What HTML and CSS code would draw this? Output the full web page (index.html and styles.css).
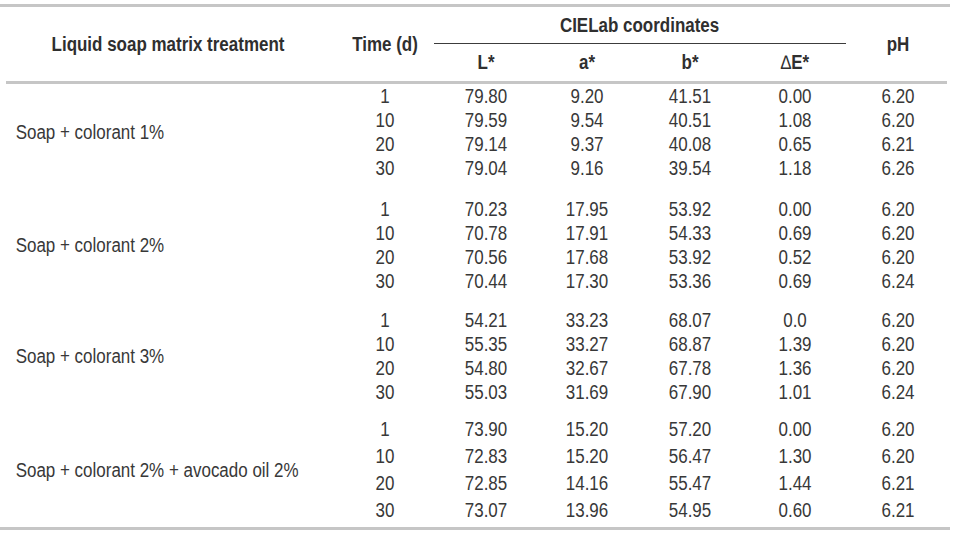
FILE: index.html
```html
<!DOCTYPE html>
<html>
<head>
<meta charset="utf-8">
<link rel="stylesheet" href="styles.css">
</head>
<body>
<div class="sheet">
<table class="data">
  <colgroup>
    <col class="c-treat"><col class="c-time"><col class="c-l"><col class="c-a"><col class="c-b"><col class="c-de"><col class="c-ph">
  </colgroup>
  <thead>
    <tr class="h1">
      <th rowspan="2" class="th-treat">Liquid soap matrix treatment</th>
      <th rowspan="2" class="th-time">Time (d)</th>
      <th colspan="4" class="th-group"><div class="group-label"><span class="narrow">CIELab coordinates</span></div></th>
      <th rowspan="2" class="th-ph">pH</th>
    </tr>
    <tr class="h2">
      <th>L*</th><th>a*</th><th>b*</th><th><span class="delta">∆</span>E*</th>
    </tr>
    <tr class="rule"><td colspan="7" class="fill"></td></tr>
  </thead>
  <tbody>
    <tr><td rowspan="4" class="label">Soap + colorant 1%</td><td>1</td><td>79.80</td><td>9.20</td><td>41.51</td><td>0.00</td><td>6.20</td></tr>
    <tr><td>10</td><td>79.59</td><td>9.54</td><td>40.51</td><td>1.08</td><td>6.20</td></tr>
    <tr><td>20</td><td>79.14</td><td>9.37</td><td>40.08</td><td>0.65</td><td>6.21</td></tr>
    <tr><td>30</td><td>79.04</td><td>9.16</td><td>39.54</td><td>1.18</td><td>6.26</td></tr>
    <tr class="gap g1"><td colspan="7" class="fill"></td></tr>
    <tr><td rowspan="4" class="label">Soap + colorant 2%</td><td>1</td><td>70.23</td><td>17.95</td><td>53.92</td><td>0.00</td><td>6.20</td></tr>
    <tr><td>10</td><td>70.78</td><td>17.91</td><td>54.33</td><td>0.69</td><td>6.20</td></tr>
    <tr><td>20</td><td>70.56</td><td>17.68</td><td>53.92</td><td>0.52</td><td>6.20</td></tr>
    <tr><td>30</td><td>70.44</td><td>17.30</td><td>53.36</td><td>0.69</td><td>6.24</td></tr>
    <tr class="gap g2"><td colspan="7" class="fill"></td></tr>
    <tr><td rowspan="4" class="label">Soap + colorant 3%</td><td>1</td><td>54.21</td><td>33.23</td><td>68.07</td><td>0.0</td><td>6.20</td></tr>
    <tr><td>10</td><td>55.35</td><td>33.27</td><td>68.87</td><td>1.39</td><td>6.20</td></tr>
    <tr><td>20</td><td>54.80</td><td>32.67</td><td>67.78</td><td>1.36</td><td>6.20</td></tr>
    <tr><td>30</td><td>55.03</td><td>31.69</td><td>67.90</td><td>1.01</td><td>6.24</td></tr>
    <tr class="gap g3"><td colspan="7" class="fill"></td></tr>
    <tr class="tall"><td rowspan="4" class="label">Soap + colorant 2% + avocado oil 2%</td><td>1</td><td>73.90</td><td>15.20</td><td>57.20</td><td>0.00</td><td>6.20</td></tr>
    <tr class="tall"><td>10</td><td>72.83</td><td>15.20</td><td>56.47</td><td>1.30</td><td>6.20</td></tr>
    <tr class="tall"><td>20</td><td>72.85</td><td>14.16</td><td>55.47</td><td>1.44</td><td>6.21</td></tr>
    <tr class="tall"><td>30</td><td>73.07</td><td>13.96</td><td>54.95</td><td>0.60</td><td>6.21</td></tr>
    <tr class="gap g4"><td colspan="7" class="fill"></td></tr>
  </tbody>
</table>
</div>
</body>
</html>
```

FILE: styles.css
```css
html, body {
  margin: 0;
  padding: 0;
  background: #ffffff;
}

body {
  padding-top: 4px;
  font-family: "Liberation Sans", Arial, sans-serif;
  color: #383838;
  font-size: 19.5px;
}

.sheet {
  width: 950px;
  border-top: 3px solid #c6c6c6;
  border-bottom: 3px solid #c6c6c6;
}

.data {
  border-collapse: separate;
  border-spacing: 0;
  table-layout: fixed;
  width: 950px;
}

.c-treat { width: 336px; }
.c-time { width: 98px; }
.c-l { width: 104px; }
.c-a { width: 98px; }
.c-b { width: 108px; }
.c-de { width: 102px; }
.c-ph { width: 104px; }

.data th,
.data td {
  padding: 0;
  text-align: center;
  vertical-align: middle;
  line-height: 24px;
  white-space: nowrap;
  transform: scaleX(0.87);
}

.data th {
  font-weight: bold;
  color: #2f2f2f;
}

.data .th-group,
.data .fill {
  transform: none;
}

.narrow {
  display: inline-block;
  transform: scaleX(0.87);
}

.delta {
  font-weight: normal;
}

.h2 th {
  line-height: 37px;
}

.group-label {
  height: 36px;
  line-height: 36px;
  border-bottom: 1px solid #3c3c3c;
}

.th-treat, .th-time {
  line-height: 24px;
}

.th-ph {
  padding-top: 4px;
}

.rule .fill {
  height: 3px;
  line-height: 3px;
  font-size: 0;
  padding: 0 3px 0 6px;
  background: #c6c6c6;
  background-clip: content-box;
}

.gap .fill {
  line-height: 0;
  font-size: 0;
}

.g1 .fill { height: 17px; }
.g2 .fill { height: 15px; }
.g3 .fill { height: 12px; }
.g4 .fill { height: 3px; }

.tall td {
  line-height: 27px;
}

.data td.label {
  text-align: left;
  padding-left: 18px;
  line-height: 24px;
  transform-origin: left center;
}
```
